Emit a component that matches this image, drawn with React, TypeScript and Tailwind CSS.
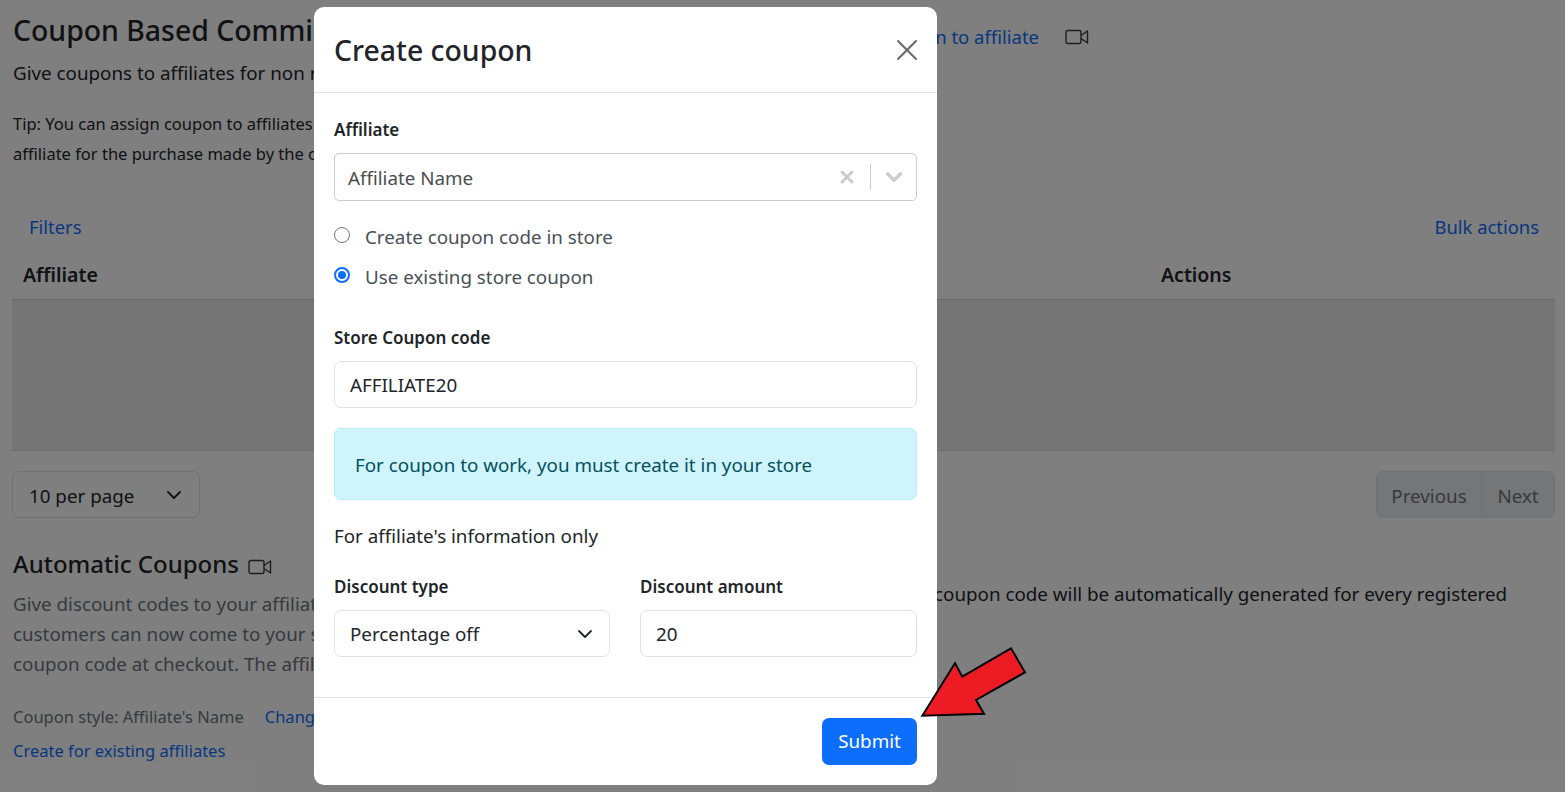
import React from "react";
import { ChevronDown, X } from "lucide-react";

function VideoIcon({ className }: { className?: string }) {
  return (
    <svg className={className} width="24" height="16" viewBox="0 0 24 16" fill="none" stroke="#3a3a3a" strokeWidth="1.4">
      <rect x="1" y="1.5" width="15" height="13" rx="2" />
      <path d="M16 6.5 L22.5 2 V14 L16 9.5" strokeLinejoin="round" />
    </svg>
  );
}

function Field({ label, children, className, low }: { label: string; children: React.ReactNode; className?: string; low?: boolean }) {
  return (
    <div className={className}>
      <div className={low ? "mt-px text-[17px] leading-[22px] font-semibold text-[#212529] mb-[12px]" : "text-[17px] leading-[22px] font-semibold text-[#212529] mb-[12px]"}>
        {label}
      </div>
      {children}
    </div>
  );
}

function Radio({ checked, label }: { checked?: boolean; label: string }) {
  return (
    <div className="flex items-center h-[40px]">
      {checked ? (
        <span className="w-4 h-4 rounded-full bg-white border-2 border-[#0d6efd] flex items-center justify-center mb-[4px]">
          <span className="w-[8px] h-[8px] rounded-full bg-[#0d6efd]" />
        </span>
      ) : (
        <span className="w-4 h-4 rounded-full bg-white border border-[#767676] mb-[4px]" />
      )}
      <span className="ml-[15px] text-[#495057]">{label}</span>
    </div>
  );
}

function CreateCouponModal() {
  return (
    <div className="w-[623px] h-[778px] bg-white rounded-[10px] flex flex-col text-[#212529]">
      <div className="h-[86px] shrink-0 border-b border-[#dee2e6] flex items-center justify-between pl-[20px] pr-[12px]">
        <h2 className="mt-[2px] text-[28.4px] font-medium leading-none">Create coupon</h2>
        <X size={36} strokeWidth={1.4} className="text-[#6a6a6a]" />
      </div>

      <div className="flex-1 px-[20px] pt-[25px]">
        <Field label="Affiliate" low>
          <div className="h-[48px] border border-[#cccccc] rounded-[5px] flex items-center pl-[13px] pr-[9px] text-[#4d4d4d]">
            <span className="flex-1 mt-[2px]">Affiliate Name</span>
            <X size={20} strokeWidth={3.5} className="text-[#cccccc]" />
            <span className="w-px h-[26px] bg-[#cccccc] ml-[13px] mr-[10px]" />
            <ChevronDown size={26} strokeWidth={3} className="text-[#cccccc]" />
          </div>
        </Field>

        <div className="mt-[16px]">
          <Radio label="Create coupon code in store" />
          <Radio checked label="Use existing store coupon" />
        </div>

        <Field label="Store Coupon code" className="mt-[30px]">
          <div className="h-[47px] border border-[#dee2e6] rounded-[7px] flex items-center px-[15px] text-[#212529]">
            <span className="mt-[2px]">AFFILIATE20</span>
          </div>
        </Field>

        <div className="mt-[20px] h-[72px] bg-[#cff4fc] border border-[#b6effb] rounded-[7px] flex items-center px-[20px] text-[#055160]">
          <span className="mt-[2px]">For coupon to work, you must create it in your store</span>
        </div>

        <div className="mt-[21px] leading-[30px] text-[#212529]">For affiliate's information only</div>

        <div className="mt-[24px] grid grid-cols-[276px_277px] gap-x-[30px]">
          <Field label="Discount type" low>
            <div className="h-[47px] border border-[#dee2e6] rounded-[7px] flex items-center justify-between pl-[15px] pr-[12px]">
              <span className="mt-[2px]">Percentage off</span>
              <ChevronDown size={24} strokeWidth={1.8} />
            </div>
          </Field>
          <Field label="Discount amount" low>
            <div className="h-[47px] border border-[#dee2e6] rounded-[7px] flex items-center px-[15px]">
              <span className="mt-[2px]">20</span>
            </div>
          </Field>
        </div>
      </div>

      <div className="h-[88px] shrink-0 border-t border-[#dee2e6] flex items-center justify-end px-[20px]">
        <button className="w-[95px] h-[47px] bg-[#0d6efd] text-white rounded-[7px]">Submit</button>
      </div>
    </div>
  );
}

export default function App() {
  return (
    <div className="relative h-[792px] overflow-hidden bg-white font-['Noto_Sans',sans-serif] text-[18.8px] text-[#212529]">
      <div className="pl-[12px] pr-[10px] pt-[10px]">
        <div className="flex items-start justify-between pr-[466px]">
          <h1 className="ml-px w-[301px] overflow-hidden text-[28.4px] leading-[40px] font-medium whitespace-nowrap">Coupon Based Commission</h1>
          <div className="flex items-center h-[54px] gap-[26px]">
            <a className="text-[#0d6efd] whitespace-nowrap text-[18.5px]">Assign coupon to affiliate</a>
            <VideoIcon />
          </div>
        </div>
        <p className="ml-px leading-[30px] whitespace-nowrap -mt-[6px]">Give coupons to affiliates for non referral sales</p>
        <p className="ml-px mt-[21px] text-[16.5px] leading-[30px]">
          Tip: You can assign coupon to affiliates.
          <br />
          affiliate for the purchase made by the customer
        </p>

        <div className="mt-[43px] flex justify-between pl-[17px] pr-[16px] leading-[30px] text-[18.4px]">
          <a className="text-[#0d6efd]">Filters</a>
          <a className="text-[#0d6efd]">Bulk actions</a>
        </div>

        <div className="mt-[11px] h-[47px] pb-[2px] border-b border-[#d0d0d0] grid grid-cols-[1138px_1fr] items-center pl-[11px] text-[19.5px] font-semibold">
          <span>Affiliate</span>
          <span>Actions</span>
        </div>
        <div className="h-[151px] bg-[#ebebeb] border-b border-[#d8d8d8]" />

        <div className="mt-[20px] flex justify-between">
          <div className="w-[188px] h-[47px] border border-[#dee2e6] rounded-[7px] flex items-center justify-between pl-[16px] pr-[13px]">
            <span className="mt-[4px]">10 per page</span>
            <ChevronDown size={24} strokeWidth={1.8} />
          </div>
          <div className="flex h-[47px] border border-[#dee2e6] rounded-[7px] bg-[#e9ecef] text-[#6c757d]">
            <span className="w-[105px] pt-[4px] flex items-center justify-center border-r border-[#dee2e6]">Previous</span>
            <span className="w-[72px] pt-[4px] flex items-center justify-center">Next</span>
          </div>
        </div>

        <div className="mt-[29px] flex">
          <div className="w-[900px] shrink-0 pl-px">
            <div className="flex items-center gap-[9px]">
              <h2 className="text-[24px] leading-[34px] font-medium">Automatic Coupons</h2>
              <VideoIcon className="mt-[6px]" />
            </div>
            <div className="mt-[8px] leading-[30px] text-[#6c757d] whitespace-nowrap">
              <p>Give discount codes to your affiliates</p>
              <p>customers can now come to your store</p>
              <p>coupon code at checkout. The affiliate</p>
            </div>
            <div className="mt-[26px] flex gap-[21px] text-[16.5px] leading-[24px]">
              <span className="text-[#6c757d]">Coupon style: Affiliate's Name</span>
              <a className="text-[#0d6efd]">Change</a>
            </div>
            <a className="block mt-[10px] text-[16.5px] leading-[24px] text-[#0d6efd]">Create for existing affiliates</a>
          </div>
          <p className="ml-[22px] mt-[32px] leading-[30px] whitespace-nowrap">coupon code will be automatically generated for every registered</p>
        </div>
      </div>

      <div className="absolute inset-0 bg-black/50 pl-[314px] pt-[7px]">
        <CreateCouponModal />
      </div>

      <svg className="absolute left-[915px] top-[640px]" width="120" height="85" viewBox="915 640 120 85">
        <polygon
          points="922.3,715.7 955,663.3 962.3,676.7 1011,648.3 1025,672.3 976,700 984,713.7"
          fill="#ed1c24"
          stroke="#000"
          strokeWidth="2"
        />
      </svg>
    </div>
  );
}
